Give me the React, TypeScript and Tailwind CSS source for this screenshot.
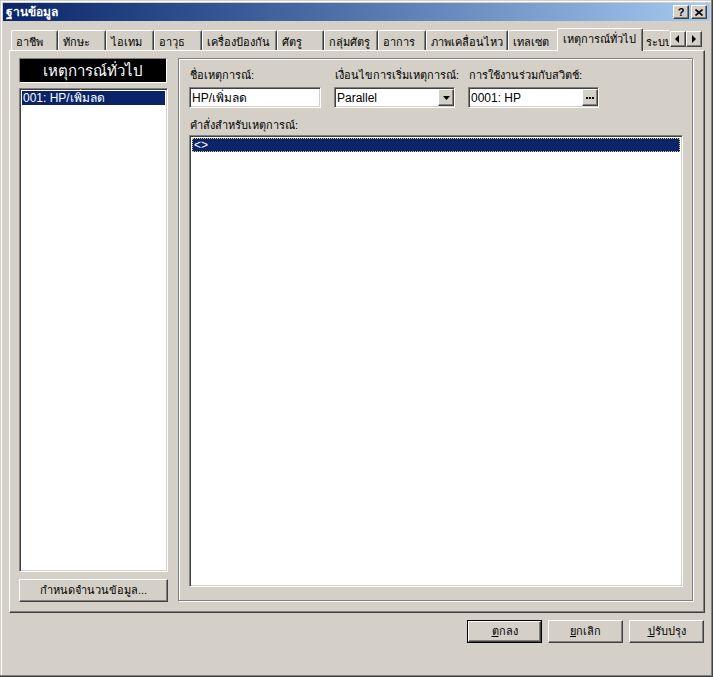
import React from "react";

const raised =
  "border border-t-white border-l-white border-r-[#404040] border-b-[#404040] shadow-[inset_-1px_-1px_#808080,inset_1px_1px_#d4d0c8]";
const sunken =
  "border border-t-[#808080] border-l-[#808080] border-r-white border-b-white shadow-[inset_1px_1px_#404040,inset_-1px_-1px_#d4d0c8]";

const tabs = [
  { label: "อาชีพ", w: "w-[47px]" },
  { label: "ทักษะ", w: "w-[48px]" },
  { label: "ไอเทม", w: "w-[48px]" },
  { label: "อาวุธ", w: "w-[48px]" },
  { label: "เครื่องป้องกัน", w: "w-[75px]" },
  { label: "ศัตรู", w: "w-[47px]" },
  { label: "กลุ่มศัตรู", w: "w-[54px]" },
  { label: "อาการ", w: "w-[48px]" },
  { label: "ภาพเคลื่อนไหว", w: "w-[82px]" },
  { label: "เทลเซต", w: "w-[51px]" },
  { label: "เหตุการณ์ทั่วไป", w: "w-[86px]", active: true },
  { label: "ระบบ", w: "w-[50px]" },
];

function Tab({ label, w, active }: { label: string; w: string; active?: boolean }) {
  if (active) {
    return (
      <div
        className={`${w} -mx-[2px] relative z-10 h-[23px] shrink-0 bg-[#d4d0c8] rounded-t-[2px] border-t border-l border-t-white border-l-white border-r border-r-[#404040] shadow-[inset_-1px_0_#808080] pl-[5px] pt-[3px] text-[11px] leading-[14px] whitespace-nowrap`}
      >
        {label}
      </div>
    );
  }
  return (
    <div
      className={`${w} mt-[2px] h-[20px] shrink-0 rounded-t-[2px] border-t border-l border-t-white border-l-white border-r border-r-[#404040] shadow-[inset_-1px_0_#808080] pl-[4px] pt-[4px] text-[11px] leading-[14px] whitespace-nowrap overflow-hidden`}
    >
      {label}
    </div>
  );
}

function Arrow({ dir }: { dir: "left" | "right" }) {
  return (
    <div className={`${raised} w-[16px] h-[16px] flex items-center justify-center bg-[#d4d0c8]`}>
      <svg width="6" height="8" viewBox="0 0 6 8">
        {dir === "left" ? (
          <path d="M4 0 L4 8 L0 4 Z" fill="#000" />
        ) : (
          <path d="M1 0 L1 8 L5 4 Z" fill="#000" />
        )}
      </svg>
    </div>
  );
}

function Field({ label, width, children }: { label: string; width: string; children: React.ReactNode }) {
  return (
    <div className={`${width} flex flex-col`}>
      <div className="h-[16px] leading-[16px] text-[11px] pl-[1px] whitespace-nowrap">{label}</div>
      <div className={`${sunken} mt-[4px] h-[21px] bg-white flex items-center`}>{children}</div>
    </div>
  );
}

export default function App() {
  return (
    <div
      className="w-[713px] h-[677px] bg-[#d4d0c8] p-[3px] text-black shadow-[inset_-1px_-1px_#404040,inset_-2px_-2px_#808080,inset_1px_1px_#d4d0c8,inset_2px_2px_#fff] overflow-hidden"
      style={{ fontFamily: "Tahoma, 'Liberation Sans', 'DejaVu Sans', sans-serif" }}
    >
      {/* Title bar */}
      <div className="h-[18px] bg-gradient-to-r from-[#0a246a] to-[#a6caf0] flex items-center justify-between pl-[3px] pr-[3px]">
        <span className="text-white font-bold text-[12px] leading-[16px]">ฐานข้อมูล</span>
        <div className="flex gap-[2px]">
          <div className={`${raised} w-[16px] h-[14px] bg-[#d4d0c8] flex items-center justify-center`}>
            <span className="font-bold text-[11px] leading-[11px]">?</span>
          </div>
          <div className={`${raised} w-[16px] h-[14px] bg-[#d4d0c8] flex items-center justify-center`}>
            <svg width="8" height="7" viewBox="0 0 8 7">
              <path d="M0.5 0.5 L7.5 6.5 M7.5 0.5 L0.5 6.5" stroke="#000" strokeWidth="1.6" />
            </svg>
          </div>
        </div>
      </div>

      {/* Tabs */}
      <div className="ml-[6px] mt-[7px] w-[696px] h-[23px] flex relative z-10">
        <div className="w-[660px] h-[23px] flex pl-[2px] overflow-hidden">
          {tabs.map((t) => (
            <Tab key={t.label} label={t.label} w={t.w} active={t.active} />
          ))}
        </div>
        <div className="flex mt-[3px] ml-[1px]">
          <Arrow dir="left" />
          <Arrow dir="right" />
        </div>
      </div>

      {/* Tab panel */}
      <div className="ml-[6px] -mt-[1px] w-[696px] h-[563px] border border-t-white border-l-white border-r-[#404040] border-b-[#404040] shadow-[inset_-1px_-1px_#808080] pl-[9px] pt-[7px] flex gap-[10px]">
        {/* Left column */}
        <div className="w-[149px] flex flex-col">
          <div className="h-[25px] w-[148px] bg-black border border-t-[#808080] border-l-[#808080] border-r-white border-b-white flex items-center justify-center text-white text-[15px] leading-[20px]">
            เหตุการณ์ทั่วไป
          </div>
          <div className={`${sunken} mt-[5px] h-[484px] bg-white p-[2px]`}>
            <div className="h-[14px] bg-[#0a246a] text-white text-[12px] leading-[14px] pl-[1px] whitespace-nowrap">
              001: HP/เพิ่มลด
            </div>
          </div>
          <div className={`${raised} mt-[7px] h-[23px] bg-[#d4d0c8] flex items-center justify-center text-[11px]`}>
            กำหนดจำนวนข้อมูล...
          </div>
        </div>

        {/* Right group */}
        <div className="w-[515px] h-[543px] border border-[#808080] shadow-[inset_1px_1px_#fff,1px_1px_#fff] pl-[10px] pt-[8px]">
          <div className="flex gap-[13px]">
            <Field label="ชื่อเหตุการณ์:" width="w-[132px]">
              <span className="pl-[2px] text-[12px] leading-[14px]">HP/เพิ่มลด</span>
            </Field>
            <Field label="เงื่อนไขการเริ่มเหตุการณ์:" width="w-[121px]">
              <span className="flex-1 pl-[2px] text-[12px] leading-[14px]">Parallel</span>
              <div className={`${raised} w-[16px] h-[17px] bg-[#d4d0c8] flex items-center justify-center`}>
                <svg width="7" height="4" viewBox="0 0 7 4">
                  <path d="M0 0 L7 0 L3.5 4 Z" fill="#000" />
                </svg>
              </div>
            </Field>
            <Field label="การใช้งานร่วมกับสวิตช์:" width="w-[131px]">
              <span className="flex-1 pl-[2px] text-[12px] leading-[14px]">0001: HP</span>
              <div className={`${raised} w-[16px] h-[17px] bg-[#d4d0c8] flex items-center justify-center`}>
                <svg width="8" height="2" viewBox="0 0 8 2">
                  <rect x="0" y="0" width="2" height="2" fill="#000" />
                  <rect x="3" y="0" width="2" height="2" fill="#000" />
                  <rect x="6" y="0" width="2" height="2" fill="#000" />
                </svg>
              </div>
            </Field>
          </div>
          <div className="mt-[9px] h-[16px] leading-[16px] text-[11px] pl-[1px]">คำสั่งสำหรับเหตุการณ์:</div>
          <div className={`${sunken} mt-[2px] w-[494px] h-[452px] bg-white p-[2px]`}>
            <div className="h-[14px] bg-[#0a246a] outline-1 outline-dotted outline-[#e6c86e] -outline-offset-1 text-white text-[12px] leading-[14px] pl-[2px]">
              {"<>"}
            </div>
          </div>
        </div>
      </div>

      {/* Dialog buttons */}
      <div className="mt-[7px] flex justify-end gap-[6px] pr-[6px]">
        <div className="w-[75px] h-[23px] border border-black">
          <div className={`${raised} w-full h-full bg-[#d4d0c8] flex items-center justify-center text-[11px]`}>
            <span>
              <u>ต</u>กลง
            </span>
          </div>
        </div>
        <div className={`${raised} w-[75px] h-[23px] bg-[#d4d0c8] flex items-center justify-center text-[11px]`}>
          <span>
            <u>ย</u>กเลิก
          </span>
        </div>
        <div className={`${raised} w-[75px] h-[23px] bg-[#d4d0c8] flex items-center justify-center text-[11px]`}>
          <span>
            <u>ป</u>รับปรุง
          </span>
        </div>
      </div>
    </div>
  );
}
